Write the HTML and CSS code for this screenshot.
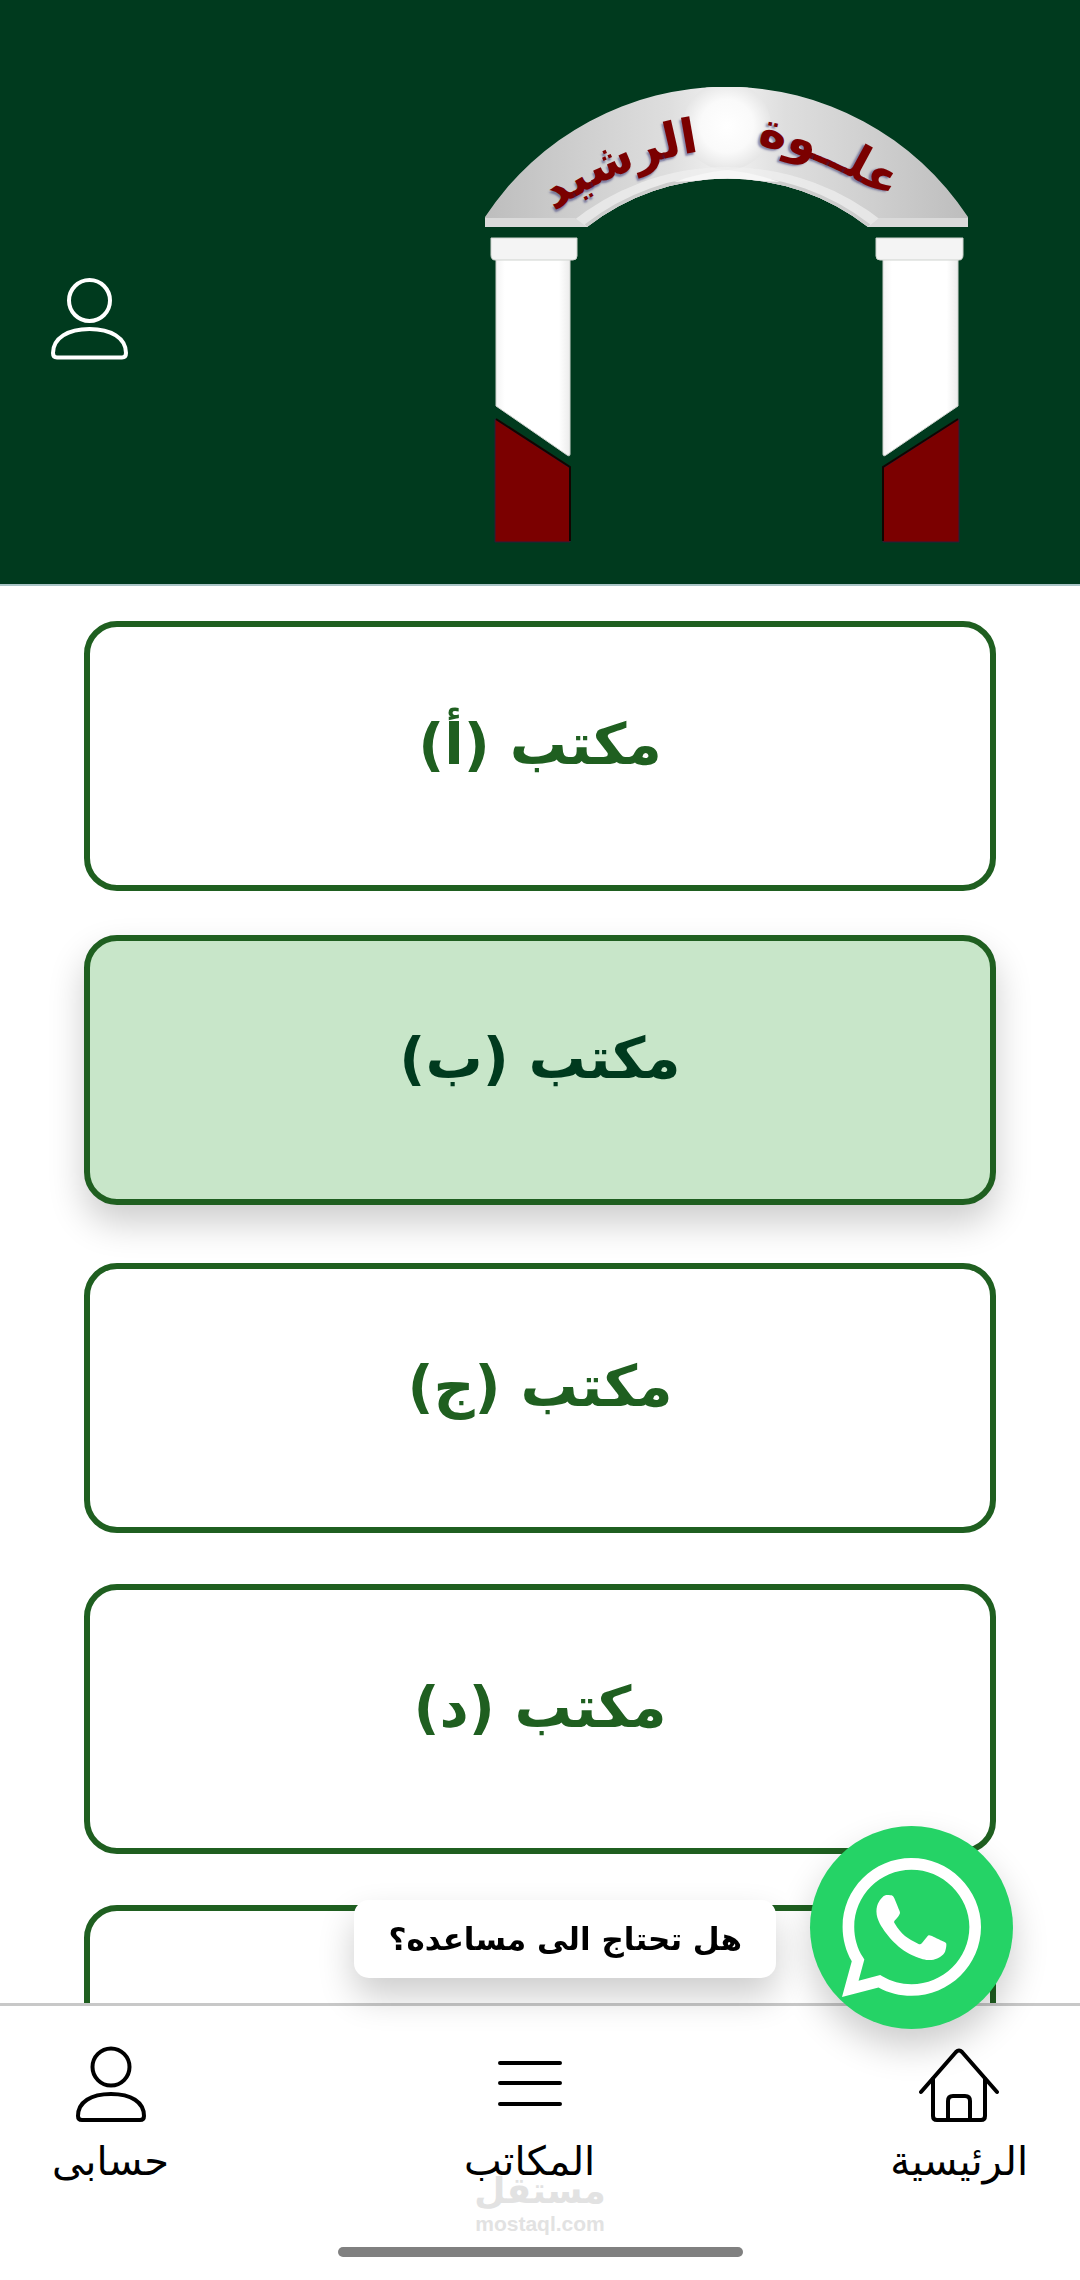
FILE: index.html
```html
<!DOCTYPE html>
<html lang="ar" dir="rtl">
<head>
    <meta charset="UTF-8">
    <meta name="viewport" content="width=device-width, initial-scale=1.0">
    <title>علوة الرشيد</title>
    <link rel="stylesheet" href="styles.css">
</head>
<body>
    <header class="header">
        <svg class="logo" viewBox="485 87 484 463" role="img" aria-label="علوة الرشيد">
            <defs>
                <linearGradient id="stone" x1="0" x2="1" y1="0" y2="0">
                    <stop offset="0" stop-color="#bdbdbd"/>
                    <stop offset="0.2" stop-color="#cfcfcf"/>
                    <stop offset="0.38" stop-color="#dedede"/>
                    <stop offset="0.5" stop-color="#f2f2f2"/>
                    <stop offset="0.62" stop-color="#dedede"/>
                    <stop offset="0.8" stop-color="#cfcfcf"/>
                    <stop offset="1" stop-color="#bdbdbd"/>
                </linearGradient>
                <radialGradient id="glow">
                    <stop offset="0" stop-color="#ffffff"/>
                    <stop offset="0.6" stop-color="#fafafa"/>
                    <stop offset="1" stop-color="#e6e6e6"/>
                </radialGradient>
                <linearGradient id="pillar" x1="0" x2="1" y1="0" y2="0">
                    <stop offset="0" stop-color="#f4f4f4"/>
                    <stop offset="0.12" stop-color="#ffffff"/>
                    <stop offset="0.85" stop-color="#ffffff"/>
                    <stop offset="1" stop-color="#ececec"/>
                </linearGradient>
                <clipPath id="archClip">
                    <path d="M485 217A289 289 0 0 1 968 217V227H868A228 228 0 0 0 587 227H485Z"/>
                </clipPath>
                <path id="curveRight" d="M750 144Q820 152 894 204"/>
                <path id="curveLeft" d="M550 214Q622 162 704 151"/>
            </defs>
            <g clip-path="url(#archClip)">
                <rect x="485" y="87" width="484" height="140" fill="url(#stone)"/>
                <circle cx="727" cy="126" r="44" fill="url(#glow)"/>
                <path d="M574 229A242 242 0 0 1 881 229" fill="none" stroke="#f0f0f0" stroke-width="14" opacity="0.7"/>
                <path d="M587 227A228 228 0 0 1 868 227" fill="none" stroke="#cdcdcd" stroke-width="7"/>
                <path d="M727 170A228 228 0 0 1 780 182L727 179L674 182A228 228 0 0 1 727 170Z" fill="#f6f6f6"/>
                <path d="M485 218H575L587 227H485ZM969 218H879L868 227H969Z" fill="#dadada"/>
            </g>
            <g class="logo-text">
                <text text-anchor="middle"><textPath href="#curveRight" startOffset="50%">علــوة</textPath></text>
                <text text-anchor="middle"><textPath href="#curveLeft" startOffset="50%">الرشيد</textPath></text>
            </g>
            <g stroke="#cfd3cf" stroke-width="1">
                <path d="M496 258H570V454Q570 457 567 455L496 406Z" fill="url(#pillar)"/>
                <path d="M958 258H883V454Q883 457 886 455L958 406Z" fill="url(#pillar)"/>
                <path d="M491 238H577V256Q577 260 573 260H495Q491 260 491 255Z" fill="#f4f4f4"/>
                <path d="M963 238H876V256Q876 260 880 260H959Q963 260 963 255Z" fill="#f4f4f4"/>
            </g>
            <g fill="#7b0000">
                <path d="M495 419L570 468V542H495Z" stroke="#2b1c3c" stroke-width="1"/>
                <path d="M959 419L883 468V542H959Z" stroke="#2b1c3c" stroke-width="1"/>
                <path d="M496 419L570 467V541M958 419L883 467V541" fill="none" stroke="#120400" stroke-width="2"/>
            </g>
        </svg>
        <button class="user-btn" type="button" aria-label="حسابى">
            <svg viewBox="0 0 77 82" fill="none" stroke="currentColor" stroke-width="4">
                <circle cx="38.500" cy="22.500" r="20.500"/>
                <path d="M2 75C2 60 17 51 38.500 51S75 60 75 75Q75 79.500 71 79.500H6Q2 79.500 2 75Z"/>
            </svg>
        </button>
    </header>

    <main class="offices">
        <button class="office" type="button">مكتب (أ)</button>
        <button class="office selected" type="button">مكتب (ب)</button>
        <button class="office" type="button">مكتب (ج)</button>
        <button class="office" type="button">مكتب (د)</button>
        <button class="office" type="button">مكتب (ه)</button>
    </main>

    <nav class="bottom-nav">
        <div class="nav-items">
            <a class="nav-item" href="#home">
                <svg viewBox="0 0 80 80" fill="none" stroke="currentColor" stroke-width="4" stroke-linecap="round" stroke-linejoin="round">
                    <path d="M2 47L37 7Q40 4 43 7L78 47"/>
                    <path d="M14 34V71Q14 75 18 75H62Q66 75 66 71V34"/>
                    <path d="M29 75V56Q29 51 34 51H46Q51 51 51 56V75"/>
                </svg>
                <span>الرئيسية</span>
            </a>
            <a class="nav-item" href="#offices">
                <svg viewBox="0 0 80 80" fill="none" stroke="currentColor" stroke-width="4" stroke-linecap="round">
                    <path d="M10 18H70M10 38H70M10 59H70"/>
                </svg>
                <span>المكاتب</span>
            </a>
            <a class="nav-item" href="#account">
                <svg viewBox="0 0 80 80" fill="none" stroke="currentColor" stroke-width="4">
                    <circle cx="40" cy="22" r="18.500"/>
                    <path d="M7 71C7 57 20 49 40 49S73 57 73 71Q73 75 69 75H11Q7 75 7 71Z"/>
                </svg>
                <span>حسابى</span>
            </a>
        </div>
        <div class="watermark">
            <strong>مستقل</strong>
            <span>mostaql.com</span>
        </div>
        <div class="home-bar"></div>
    </nav>

    <a class="help" href="#whatsapp">
        <span class="whatsapp">
            <svg viewBox="0 0 448 448" fill="#ffffff">
                <path d="M380.900 65.100C339 23.100 283.200 0 223.900 0 101.500 0 1.900 99.600 1.900 222c0 39.100 10.200 77.300 29.600 111L0 448l117.700-30.900c32.400 17.700 68.900 27 106.100 27h.1c122.300 0 224.100-99.600 224.100-222 0-59.300-25.200-115-67.100-157zM223.900 406.700c-33.200 0-65.700-8.900-94-25.700l-6.700-4-69.800 18.300L72 327.200l-4.400-7c-18.500-29.400-28.200-63.300-28.200-98.200 0-101.700 82.800-184.500 184.600-184.500 49.300 0 95.600 19.200 130.400 54.100 34.800 34.900 56.200 81.200 56.100 130.500 0 101.800-84.900 184.600-186.600 184.600z"/>
                <path d="M325.100 268.500c-5.500-2.800-32.800-16.200-37.900-18-5.100-1.900-8.800-2.800-12.500 2.800s-14.300 18-17.600 21.800c-3.200 3.700-6.500 4.200-12 1.400-32.600-16.300-54-29.100-75.500-66-5.700-9.800 5.700-9.100 16.300-30.300 1.800-3.700.9-6.900-.5-9.700s-12.500-30.100-17.100-41.200c-4.500-10.800-9.100-9.300-12.500-9.500-3.200-.2-6.900-.2-10.600-.2s-9.700 1.400-14.800 6.900c-5.100 5.600-19.400 19-19.400 46.300s19.900 53.700 22.600 57.400c2.800 3.700 39.100 59.700 94.800 83.800 35.200 15.200 49 16.500 66.600 13.900 10.700-1.600 32.800-13.400 37.400-26.400s4.600-24.100 3.200-26.400c-1.300-2.500-5-3.900-10.500-6.600z"/>
            </svg>
        </span>
        <span class="help-text">هل تحتاج الى مساعده؟</span>
    </a>
</body>
</html>
```
FILE: styles.css
```css
* {
    box-sizing: border-box;
}

body {
    display: flex;
    flex-direction: column;
    height: 100vh;
    margin: 0;
    background-color: #fff;
    font-family: "DejaVu Sans", "Noto Sans", sans-serif;
}

button {
    border: none;
    background: none;
    font-family: inherit;
    cursor: pointer;
}

a {
    color: inherit;
    text-decoration: none;
}

.header {
    display: flex;
    align-items: center;
    justify-content: space-between;
    padding: 87px 111px 34px 51px;
    border-bottom: 2px solid #a9c4c6;
    background-color: #003a1e;
}

.logo {
    width: 484px;
    height: 463px;
}

.logo-text {
    fill: #7b0000;
    font-size: 48px;
    font-weight: bold;
    text-shadow: -2px 2px 2px rgba(40, 40, 110, 0.5);
}

.user-btn {
    width: 77px;
    padding: 0;
    color: #fff;
}

.user-btn svg {
    display: block;
    width: 100%;
}

.offices {
    display: flex;
    flex: 1;
    flex-direction: column;
    gap: 51px;
    min-height: 0;
    padding: 35px 84px;
    overflow-y: auto;
    scrollbar-width: none;
}

.office {
    flex: none;
    padding: 83px 20px 107px;
    border: 6px solid #1f5f20;
    border-radius: 33px;
    background-color: #fff;
    color: #1f5f20;
    font-size: 57px;
    font-weight: bold;
    line-height: 68px;
}

.office.selected {
    background-color: #c8e6c9;
    color: #003a1e;
    box-shadow: 0 18px 36px rgba(0, 0, 0, 0.2);
    transform: translateY(-7px);
}

.bottom-nav {
    display: flex;
    flex-direction: column;
    align-items: center;
    padding-bottom: 23px;
    border-top: 3px solid #c8c8c8;
    background-color: #fff;
}

.nav-items {
    display: flex;
    align-self: stretch;
    justify-content: space-between;
    padding: 39px 52px 0;
}

.nav-item {
    display: flex;
    flex-direction: column;
    align-items: center;
    color: #000;
    font-size: 40px;
    line-height: 56px;
}

.nav-item svg {
    width: 80px;
    height: 80px;
    margin-bottom: 8px;
}

.watermark {
    display: flex;
    flex-direction: column;
    align-items: center;
    margin: -19px 0 11px;
    color: #e2e2e2;
    font-family: "Liberation Sans", "DejaVu Sans", sans-serif;
    font-size: 21px;
    font-weight: bold;
    line-height: 24px;
}

.watermark strong {
    font-family: "DejaVu Sans", sans-serif;
    font-size: 36px;
    line-height: 42px;
}

.home-bar {
    width: 405px;
    max-width: 80%;
    height: 10px;
    border-radius: 5px;
    background-color: #808080;
}

.help {
    position: fixed;
    right: 67px;
    bottom: 251px;
    display: flex;
    align-items: flex-end;
    gap: 34px;
}

.help-text {
    margin-bottom: 51px;
    padding: 15px 34px;
    border-radius: 15px;
    background-color: #fff;
    box-shadow: 0 18px 36px rgba(0, 0, 0, 0.2);
    color: #000;
    font-size: 31px;
    font-weight: bold;
    line-height: 48px;
}

.whatsapp {
    display: flex;
    align-items: center;
    justify-content: center;
    width: 203px;
    height: 203px;
    border-radius: 50%;
    background-color: #25d366;
    box-shadow: 0 18px 36px rgba(0, 0, 0, 0.2);
}

.whatsapp svg {
    width: 139px;
    height: 139px;
}
```
